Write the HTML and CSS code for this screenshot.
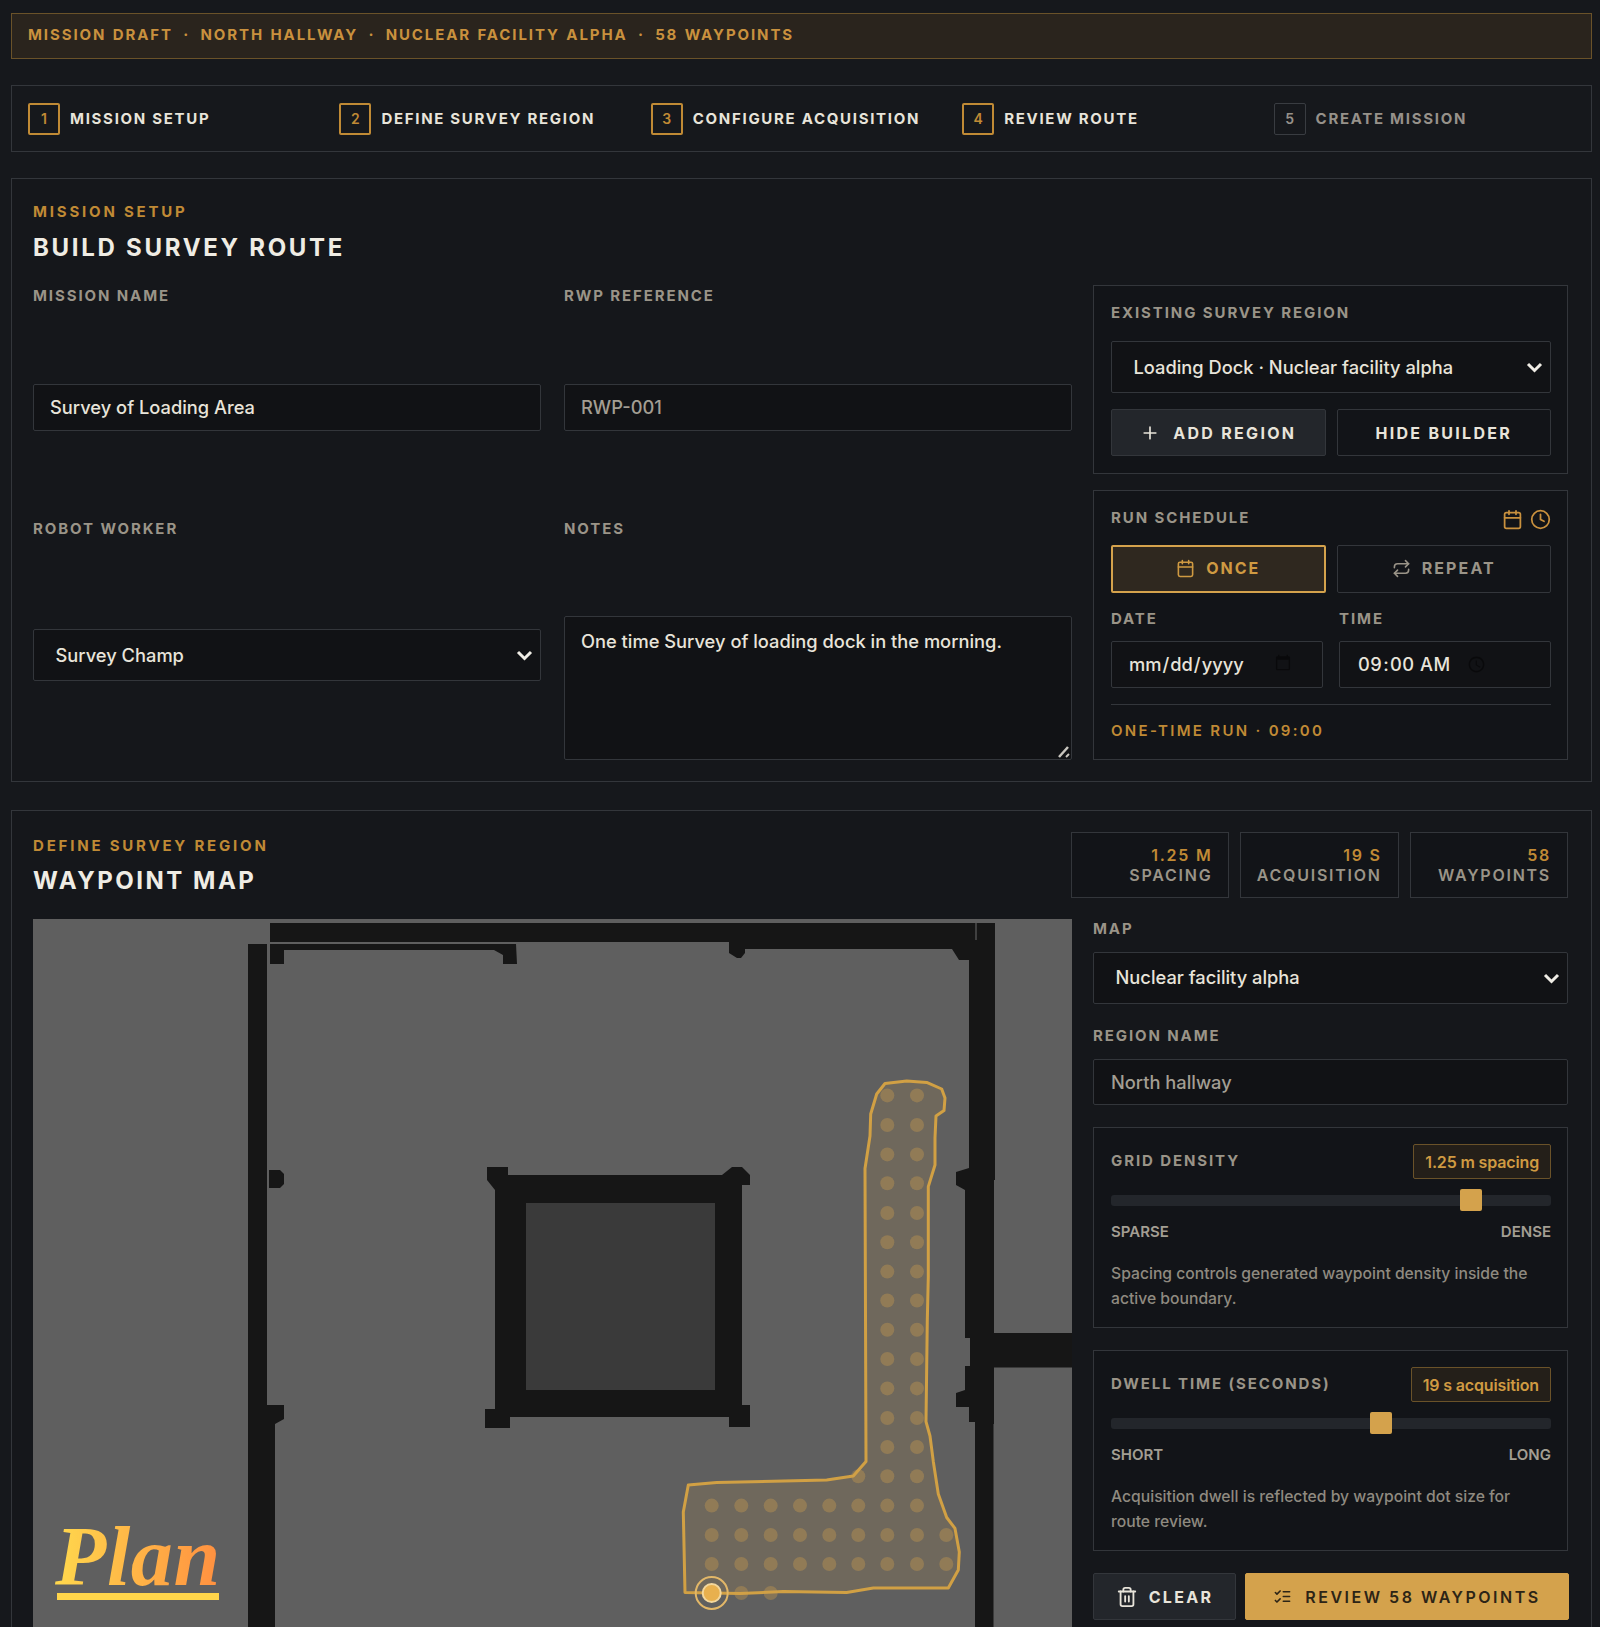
FILE: index.html
```html
<html>
    <head>
        <title>Build survey route</title>
        <link rel="stylesheet" href="styles.css">
    </head>
    <body>
        <div class="page">

            <!--Draft banner-->
            <div class="banner">
                <span>MISSION DRAFT</span><span>·</span>
                <span>NORTH HALLWAY</span><span>·</span>
                <span>NUCLEAR FACILITY ALPHA</span><span>·</span>
                <span>58 WAYPOINTS</span>
            </div>

            <!--Steps-->
            <div class="stepper">
                <div class="step"><span class="step_num">1</span><span class="step_text">MISSION SETUP</span></div>
                <div class="step"><span class="step_num">2</span><span class="step_text">DEFINE SURVEY REGION</span></div>
                <div class="step"><span class="step_num">3</span><span class="step_text">CONFIGURE ACQUISITION</span></div>
                <div class="step"><span class="step_num">4</span><span class="step_text">REVIEW ROUTE</span></div>
                <div class="step step_off"><span class="step_num">5</span><span class="step_text">CREATE MISSION</span></div>
            </div>

            <!--Mission setup-->
            <div class="panel setup_panel">
                <div class="eyebrow">MISSION SETUP</div>
                <h2 class="title setup_title">BUILD SURVEY ROUTE</h2>

                <div class="columns">
                    <div class="form_grid">
                        <div class="field">
                            <label class="label">MISSION NAME</label>
                            <input class="control slot_input" type="text" value="Survey of Loading Area">
                        </div>
                        <div class="field">
                            <label class="label">RWP REFERENCE</label>
                            <input class="control slot_input muted" type="text" value="RWP-001">
                        </div>
                        <div class="field">
                            <label class="label">ROBOT WORKER</label>
                            <select class="control picker slot_select"><option>Survey Champ</option></select>
                        </div>
                        <div class="field">
                            <label class="label">NOTES</label>
                            <textarea class="control notes">One time Survey of loading dock in the morning.</textarea>
                        </div>
                    </div>

                    <div class="side">
                        <div class="box">
                            <div class="label">EXISTING SURVEY REGION</div>
                            <select class="control picker box_picker"><option>Loading Dock · Nuclear facility alpha</option></select>
                            <div class="pair">
                                <button class="btn btn_raised">
                                    <svg class="icon icon_plus" viewBox="0 0 24 24"><path d="M5 12h14M12 5v14"/></svg>
                                    ADD REGION
                                </button>
                                <button class="btn">HIDE BUILDER</button>
                            </div>
                        </div>

                        <div class="box schedule_box">
                            <div class="box_head">
                                <div class="label">RUN SCHEDULE</div>
                                <div class="head_icons">
                                    <svg class="icon icon_gold" viewBox="0 0 24 24"><rect x="3" y="4" width="18" height="18" rx="2"/><path d="M16 2v4M8 2v4M3 10h18"/></svg>
                                    <svg class="icon icon_gold" viewBox="0 0 24 24"><circle cx="12" cy="12" r="10"/><path d="M12 6v6l4 2"/></svg>
                                </div>
                            </div>
                            <div class="pair schedule_pair">
                                <button class="btn btn_active">
                                    <svg class="icon icon_small" viewBox="0 0 24 24"><rect x="3" y="4" width="18" height="18" rx="2"/><path d="M16 2v4M8 2v4M3 10h18"/></svg>
                                    ONCE
                                </button>
                                <button class="btn btn_dim">
                                    <svg class="icon icon_small" viewBox="0 0 24 24"><path d="m17 2 4 4-4 4"/><path d="M3 11v-1a4 4 0 0 1 4-4h14"/><path d="m7 22-4-4 4-4"/><path d="M21 13v1a4 4 0 0 1-4 4H3"/></svg>
                                    REPEAT
                                </button>
                            </div>
                            <div class="date_row">
                                <div>
                                    <div class="label">DATE</div>
                                    <input class="control date_input date_day" type="date">
                                </div>
                                <div>
                                    <div class="label">TIME</div>
                                    <input class="control date_input date_time" type="time" value="09:00">
                                </div>
                            </div>
                            <div class="run_note">ONE-TIME RUN · 09:00</div>
                        </div>
                    </div>
                </div>
            </div>

            <!--Waypoint map-->
            <div class="panel map_panel">
                <div class="map_head">
                    <div class="map_heading">
                        <div class="eyebrow">DEFINE SURVEY REGION</div>
                        <h2 class="title map_title">WAYPOINT MAP</h2>
                    </div>
                    <div class="chips">
                        <div class="chip"><div class="chip_value">1.25 M</div><div class="chip_label">SPACING</div></div>
                        <div class="chip"><div class="chip_value">19 S</div><div class="chip_label">ACQUISITION</div></div>
                        <div class="chip"><div class="chip_value">58</div><div class="chip_label">WAYPOINTS</div></div>
                    </div>
                </div>

                <div class="columns">
                    <div class="map">
                        <!-- viewBox uses page coordinates so the plan is easy to measure -->
                        <svg class="plan" viewBox="33 919 1039 760">
                            <g class="walls">
                                <path d="M270 923H995V1180H994V1333H1072V1367.5H994V1424H993.5V1679H975V1422H969V1407H956V1393L965 1390V1366H970V1338H965V1190L956 1185V1172L969 1168V960H959L952 949H745V953L741 958H737L729 953V942H270Z"/>
                                <path d="M248 944H267V1405H284V1419L275 1424V1679H248Z"/>
                                <path d="M269 1170H280L284 1174V1184L280 1188H269Z"/>
                                <path d="M270 944H516L517 964H503V955L494 950H284V964H270Z"/>
                                <path d="M495 1190L487 1180V1167H508V1175H722L732 1167H742L750 1175V1185H742V1405H750V1427H729V1417H510V1428H485V1409H495Z"/>
                            </g>
                            <rect class="core" x="526" y="1203" width="189" height="187"/>
                            <path class="seam" d="M976 923V940"/>

                            <path class="region" d="M885 1083.5 906.7 1081 926.7 1082.4 941.7 1089 945 1098 944 1110.6 936 1116 935 1137.8 935 1165 928.3 1186.6 928.3 1277 927.3 1320.4 926 1421.7 930 1436 933.3 1461.4 938.3 1494 946.7 1517.5 955 1528.4 959.3 1552 958.3 1570 948.3 1588 873.3 1588 846.7 1592.4 783.3 1591.6 740 1593.5 685 1592.4 683.3 1512 688.3 1485 716.7 1482.4 773.3 1481.3 826.7 1480 853.3 1476 866 1461.4 865 1168.5 870 1136 870.7 1114 876.7 1094Z"/>

                            <g class="dots">
                                <circle cx="887.3" cy="1095.4" r="7"/><circle cx="917" cy="1095.4" r="7"/>
                                <circle cx="887.3" cy="1125" r="7"/><circle cx="917" cy="1125" r="7"/>
                                <circle cx="887.3" cy="1154.4" r="7"/><circle cx="917" cy="1154.4" r="7"/>
                                <circle cx="887.3" cy="1183.3" r="7"/><circle cx="917" cy="1183.3" r="7"/>
                                <circle cx="887.3" cy="1213" r="7"/><circle cx="917" cy="1213" r="7"/>
                                <circle cx="887.3" cy="1242.3" r="7"/><circle cx="917" cy="1242.3" r="7"/>
                                <circle cx="887.3" cy="1271.6" r="7"/><circle cx="917" cy="1271.6" r="7"/>
                                <circle cx="887.3" cy="1300.5" r="7"/><circle cx="917" cy="1300.5" r="7"/>
                                <circle cx="887.3" cy="1329.8" r="7"/><circle cx="917" cy="1329.8" r="7"/>
                                <circle cx="887.3" cy="1359" r="7"/><circle cx="917" cy="1359" r="7"/>
                                <circle cx="887.3" cy="1388.4" r="7"/><circle cx="917" cy="1388.4" r="7"/>
                                <circle cx="887.3" cy="1418" r="7"/><circle cx="917" cy="1418" r="7"/>
                                <circle cx="887.3" cy="1447" r="7"/><circle cx="917" cy="1447" r="7"/>
                                <circle cx="858.3" cy="1476.3" r="7"/><circle cx="887.3" cy="1476.3" r="7"/><circle cx="917" cy="1476.3" r="7"/>
                                <circle cx="711.7" cy="1505.6" r="7"/><circle cx="741.3" cy="1505.6" r="7"/><circle cx="770.7" cy="1505.6" r="7"/><circle cx="800" cy="1505.6" r="7"/><circle cx="829.3" cy="1505.6" r="7"/><circle cx="858.3" cy="1505.6" r="7"/><circle cx="887.3" cy="1505.6" r="7"/><circle cx="917" cy="1505.6" r="7"/>
                                <circle cx="711.7" cy="1535" r="7"/><circle cx="741.3" cy="1535" r="7"/><circle cx="770.7" cy="1535" r="7"/><circle cx="800" cy="1535" r="7"/><circle cx="829.3" cy="1535" r="7"/><circle cx="858.3" cy="1535" r="7"/><circle cx="887.3" cy="1535" r="7"/><circle cx="917" cy="1535" r="7"/><circle cx="946.3" cy="1535" r="7"/>
                                <circle cx="711.7" cy="1564" r="7"/><circle cx="741.3" cy="1564" r="7"/><circle cx="770.7" cy="1564" r="7"/><circle cx="800" cy="1564" r="7"/><circle cx="829.3" cy="1564" r="7"/><circle cx="858.3" cy="1564" r="7"/><circle cx="887.3" cy="1564" r="7"/><circle cx="917" cy="1564" r="7"/><circle cx="946.3" cy="1564" r="7"/>
                                <circle cx="741.3" cy="1593" r="7"/><circle cx="770.7" cy="1593" r="7"/>
                            </g>
                            <circle class="start_ring" cx="711.7" cy="1593" r="16"/>
                            <circle class="start_dot" cx="711.7" cy="1593" r="9"/>
                        </svg>

                        <div class="plan_tag">
                            <div class="plan_word">Plan</div>
                            <div class="plan_rule"></div>
                        </div>
                    </div>

                    <div class="map_side">
                        <div class="label">MAP</div>
                        <select class="control picker map_picker"><option>Nuclear facility alpha</option></select>
                        <div class="label spaced">REGION NAME</div>
                        <input class="control region_input muted" type="text" value="North hallway">

                        <div class="box tune">
                            <div class="box_head">
                                <div class="label">GRID DENSITY</div>
                                <div class="badge">1.25 m spacing</div>
                            </div>
                            <input class="slider" type="range" min="0" max="100" step="0.1" value="83.5">
                            <div class="ends"><span>SPARSE</span><span>DENSE</span></div>
                            <p class="help">Spacing controls generated waypoint density inside the active boundary.</p>
                        </div>

                        <div class="box tune">
                            <div class="box_head">
                                <div class="label">DWELL TIME (SECONDS)</div>
                                <div class="badge">19 s acquisition</div>
                            </div>
                            <input class="slider" type="range" min="0" max="100" step="0.1" value="62">
                            <div class="ends"><span>SHORT</span><span>LONG</span></div>
                            <p class="help">Acquisition dwell is reflected by waypoint dot size for route review.</p>
                        </div>

                        <div class="actions">
                            <button class="btn btn_raised clear">
                                <svg class="icon icon_trash" viewBox="0 0 24 24"><path d="M3 6h18"/><path d="M19 6v14c0 1-1 2-2 2H7c-1 0-2-1-2-2V6"/><path d="M8 6V4c0-1 1-2 2-2h4c1 0 2 1 2 2v2"/><path d="M10 11v6M14 11v6"/></svg>
                                CLEAR
                            </button>
                            <button class="btn btn_primary">
                                <svg class="icon icon_small" viewBox="0 0 24 24"><path d="m3 17 2 2 4-4"/><path d="m3 7 2 2 4-4"/><path d="M13 6h8M13 12h8M13 18h8"/></svg>
                                REVIEW 58 WAYPOINTS
                            </button>
                        </div>
                    </div>
                </div>
            </div>

        </div>
    </body>
</html>
```

FILE: styles.css
```css
html,body{
    border:0;
    margin:0;
    padding:0;
    height:100%;
    overflow:hidden;
    background:#16181c;
}

body{
    font-family:Inter,"Liberation Sans",sans-serif;
    color:#e8e4da;
}

.page{
    padding:13px 8px 0 11px;
}

/* Banner */
.banner{
    display:flex;
    align-items:center;
    gap:10.3px;
    height:46px;
    box-sizing:border-box;
    padding:0 16px 4px;
    border:1px solid #6a5229;
    background:#2a241d;
    color:#c9913e;
    font-size:15px;
    font-weight:700;
    letter-spacing:1.9px;
    word-spacing:1px;
}

/* Stepper */
.stepper{
    display:grid;
    grid-template-columns:repeat(5,1fr);
    gap:10.5px;
    height:67px;
    box-sizing:border-box;
    margin-top:26px;
    padding:0 16.5px 0 16px;
    border:1px solid #33363b;
    align-items:center;
}

.step{
    display:flex;
    align-items:center;
    gap:10px;
}

.step_num{
    display:flex;
    align-items:center;
    justify-content:center;
    width:32px;
    height:32px;
    box-sizing:border-box;
    border:2px solid #c08a35;
    border-radius:2px;
    color:#c08a35;
    font-size:14px;
    font-weight:600;
}

.step_text{
    font-size:15px;
    font-weight:700;
    letter-spacing:1.7px;
    color:#e8e4da;
}

.step_off .step_num{
    border:1px solid #393c41;
    color:#96918a;
}

.step_off .step_text{
    color:#96918a;
}

/* Panels */
.panel{
    margin-top:26px;
    padding:22px 22px 21px 21px;
    border:1px solid #33363b;
    background:#15171b;
}

.setup_panel{
    padding-top:23px;
}

.map_panel{
    margin-top:28px;
    padding-top:21px;
    padding-right:23px;
}

.eyebrow{
    font-size:15px;
    line-height:20px;
    font-weight:700;
    letter-spacing:2.8px;
    color:#c08a35;
}

.title{
    margin:0;
    font-size:24px;
    line-height:30px;
    font-weight:700;
    letter-spacing:2.7px;
    color:#efece4;
}

.setup_title{
    margin-top:11px;
    margin-bottom:22px;
}

.map_heading{
    padding-top:4px;
}

.map_title{
    margin-top:10px;
    letter-spacing:2.5px;
}

.columns{
    display:grid;
    grid-template-columns:1039px 475px;
    gap:21px;
}

.form_grid{
    display:grid;
    grid-template-columns:508px 508px;
    grid-template-rows:146px 242px;
    gap:87px 23px;
}

.label{
    font-size:15px;
    line-height:20px;
    font-weight:700;
    letter-spacing:1.9px;
    color:#9a9488;
}

.field .label{
    display:block;
    padding-top:1px;
}

.control{
    display:block;
    width:100%;
    box-sizing:border-box;
    margin:0;
    border:1px solid #33363b;
    border-radius:2px;
    background:#111215;
    color:#e8e4da;
    font-family:Inter,"Liberation Sans",sans-serif;
    font-size:18.3px;
    font-weight:500;
    outline:none;
}

.muted{
    color:#a39e93;
}

.slot_input{
    height:47px;
    margin-top:78px;
    padding:0 16px 2px;
}

.picker{
    -webkit-appearance:none;
    appearance:none;
    height:52px;
    padding:0 30px 0 21.5px;
    background-image:url("data:image/svg+xml,%3Csvg xmlns='http://www.w3.org/2000/svg' width='17' height='11' viewBox='0 0 17 11'%3E%3Cpath d='M2 2l6.5 6.5L15 2' fill='none' stroke='%23f0ede6' stroke-width='3'/%3E%3C/svg%3E");
    background-repeat:no-repeat;
    background-position:right 7px center;
}

.slot_select{
    margin-top:90px;
}

.notes{
    height:144px;
    margin-top:77px;
    padding:11px 16px;
    resize:both;
    line-height:26px;
}

.notes::-webkit-resizer{
    background:url("data:image/svg+xml,%3Csvg xmlns='http://www.w3.org/2000/svg' width='15' height='15' viewBox='0 0 15 15'%3E%3Cpath d='M3 13 12 3' stroke='%23c9c6bf' stroke-width='2.5'/%3E%3Cpath d='M10 13 13 10' stroke='%23c9c6bf' stroke-width='2'/%3E%3C/svg%3E") no-repeat;
}

/* Right hand boxes */
.side{
    display:flex;
    flex-direction:column;
    gap:16px;
}

.box{
    padding:17px 16px 17px 17px;
    border:1px solid #33363b;
    background:#121418;
}

.schedule_box{
    flex:1;
}

.box_head{
    display:flex;
    align-items:center;
    justify-content:space-between;
}

.box_picker{
    margin-top:18px;
}

.pair{
    display:grid;
    grid-template-columns:1fr 1fr;
    gap:11px;
    margin-top:16px;
}

.schedule_pair{
    margin-top:17px;
}

.btn{
    display:flex;
    align-items:center;
    justify-content:center;
    gap:13px;
    height:47px;
    box-sizing:border-box;
    padding:0;
    border:1px solid #33363b;
    border-radius:2px;
    background:#121418;
    color:#e8e4da;
    font-family:Inter,"Liberation Sans",sans-serif;
    font-size:16px;
    font-weight:700;
    letter-spacing:2.3px;
}

.btn_raised{
    background:#23262b;
}

.btn_active{
    height:48px;
    gap:11px;
    padding-bottom:2px;
    border:2px solid #d4a24c;
    background:#2f281f;
    color:#cf9a42;
    letter-spacing:2px;
}

.btn_dim{
    height:48px;
    gap:11px;
    padding-bottom:2px;
    color:#9a9488;
    letter-spacing:2.1px;
}

.clear{
    gap:11px;
}

.btn_primary{
    background:#d4a24c;
    border-color:#d4a24c;
    color:#2c2416;
    font-weight:600;
    letter-spacing:2.5px;
}

.icon{
    fill:none;
    stroke:currentColor;
    stroke-width:2;
    stroke-linecap:round;
    stroke-linejoin:round;
    flex:none;
}

.icon_plus{
    width:20px;
    height:20px;
}

.icon_small{
    width:19px;
    height:19px;
}

.icon_trash{
    width:22px;
    height:22px;
}

.icon_gold{
    width:21px;
    height:21px;
    color:#c9913e;
}

.head_icons{
    display:flex;
    gap:7px;
    height:20px;
    align-items:center;
    transform:translateY(1px);
}

.date_row{
    display:grid;
    grid-template-columns:1fr 1fr;
    gap:16px;
    margin-top:16px;
}

.date_input{
    height:47px;
    margin-top:12px;
    padding:0 16px;
}

.date_input::-webkit-calendar-picker-indicator{
    opacity:0.45;
}

.date_day{
    padding-bottom:2px;
}

.date_day::-webkit-calendar-picker-indicator{
    margin-right:12px;
}

.date_time{
    padding-left:17px;
    letter-spacing:0.4px;
}

.date_time::-webkit-calendar-picker-indicator{
    margin-right:45px;
}

.run_note{
    margin-top:16px;
    padding-top:16px;
    border-top:1px solid #33363b;
    font-size:15px;
    line-height:20px;
    font-weight:600;
    letter-spacing:2.3px;
    color:#c08a35;
}

/* Map header */
.map_head{
    display:flex;
    justify-content:space-between;
    height:66px;
    margin-bottom:21px;
}

.chips{
    display:flex;
    gap:11px;
}

.chip{
    width:158.3px;
    box-sizing:border-box;
    padding:12px 16px 0 0;
    border:1px solid #33363b;
    background:#121418;
    text-align:right;
    font-size:16px;
    line-height:20px;
    font-weight:600;
    letter-spacing:1.75px;
}

.chip_value{
    color:#c08a35;
}

.chip_label{
    color:#9a9488;
}

/* Map */
.map{
    position:relative;
    height:760px;
    background:#5f5f5f;
}

.plan{
    display:block;
    width:1039px;
    height:760px;
}

.walls{
    fill:#161616;
}

.core{
    fill:#3a3a3a;
}

.seam{
    stroke:#6a6a6a;
    stroke-width:1;
}

.region{
    fill:#d4a24c;
    fill-opacity:0.14;
    stroke:#d1a044;
    stroke-width:3;
    stroke-linejoin:round;
}

.dots{
    fill:#d4a24c;
    fill-opacity:0.34;
}

.start_ring{
    fill:none;
    stroke:#e2b768;
    stroke-width:2;
}

.start_dot{
    fill:#e8b04e;
    stroke:#f3d79c;
    stroke-width:2;
}

.plan_tag{
    position:absolute;
    left:24px;
    top:592px;
    width:162px;
}

.plan_word{
    height:82px;
    margin-left:-2px;
    font-family:"Liberation Serif",serif;
    font-style:italic;
    font-weight:700;
    font-size:84px;
    line-height:92px;
    letter-spacing:0.6px;
    background:linear-gradient(90deg,#ffd84d,#ff9040);
    -webkit-background-clip:text;
    background-clip:text;
    color:transparent;
}

.plan_rule{
    height:7px;
    background:#ffd54a;
}

/* Map side column */
.map_picker,
.region_input{
    margin-top:13px;
}

.map_picker{
    padding-bottom:2px;
}

.region_input{
    height:46px;
    padding:0 17px 1px;
}

.spaced{
    margin-top:22px;
}

.tune{
    margin-top:22px;
    padding:16px 16px 16px 17px;
    height:201px;
    box-sizing:border-box;
}

.tune .box_head{
    height:35px;
}

.tune .label{
    padding-bottom:2px;
}

.badge{
    display:flex;
    align-items:center;
    height:35px;
    box-sizing:border-box;
    padding:0 11px;
    border:1px solid #6a5229;
    border-radius:2px;
    background:#241f19;
    color:#cf9a42;
    font-size:16px;
    font-weight:600;
    letter-spacing:-0.15px;
}

.slider{
    -webkit-appearance:none;
    appearance:none;
    display:block;
    width:100%;
    height:22px;
    margin:10px 0 0;
    background:transparent;
}

.slider::-webkit-slider-runnable-track{
    height:11px;
    border-radius:3px;
    background:#23262b;
}

.slider::-webkit-slider-thumb{
    -webkit-appearance:none;
    width:22px;
    height:22px;
    margin-top:-5.5px;
    border-radius:2px;
    background:#d4a24c;
}

.ends{
    display:flex;
    justify-content:space-between;
    margin-top:11px;
    font-size:15px;
    line-height:20px;
    font-weight:600;
    color:#a39e93;
}

.help{
    margin:19px 0 0;
    font-size:15.7px;
    line-height:25px;
    font-weight:500;
    color:#8f8a80;
}

.actions{
    display:grid;
    grid-template-columns:143px 324px;
    gap:9px;
    margin-top:22px;
}
```
